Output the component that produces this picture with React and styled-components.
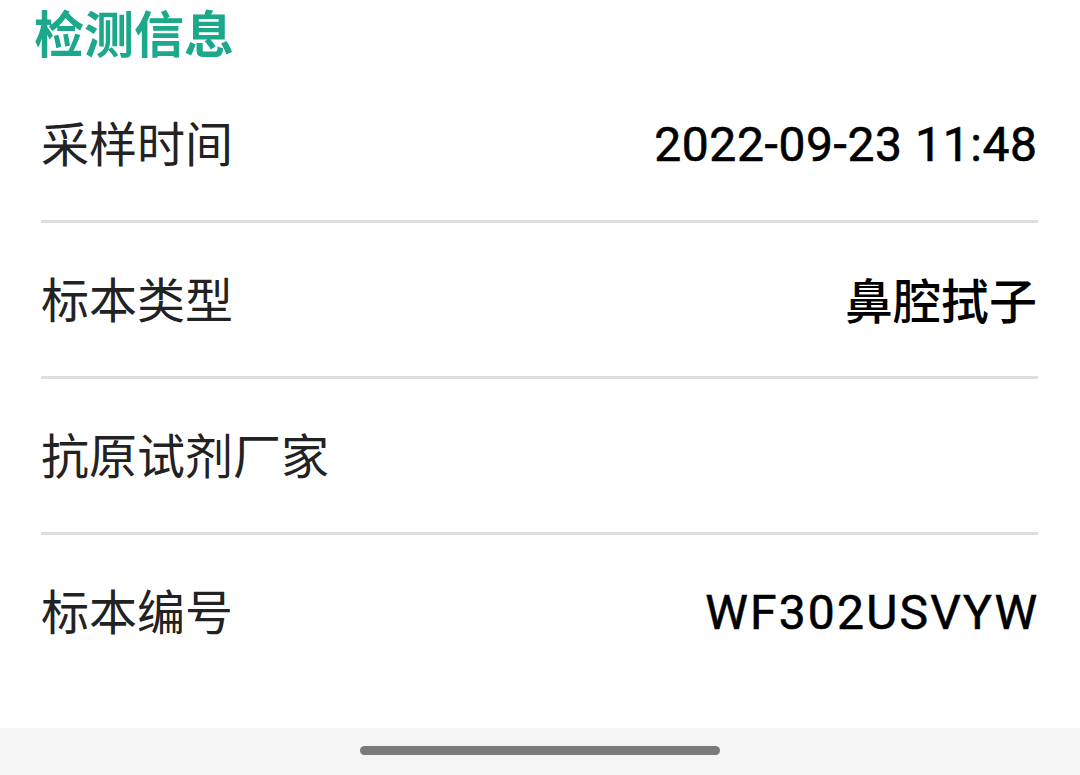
import React from 'react';
import styled, { createGlobalStyle } from 'styled-components';

const GlobalStyle = createGlobalStyle`
  html, body {
    margin: 0;
    padding: 0;
    background: #ffffff;
  }
  body {
    font-family: "Noto Sans CJK SC", "Noto Sans", sans-serif;
  }
`;

const Screen = styled.div`
  width: 1080px;
  height: 775px;
  display: flex;
  flex-direction: column;
  background: #ffffff;
  overflow: hidden;
`;

const Content = styled.div`
  flex: 1;
  padding: 0 42px 0 41px;
  display: flex;
  flex-direction: column;
`;

const SectionTitle = styled.h2`
  margin: 4px 0 9px -7px;
  font-size: 50px;
  line-height: 54px;
  font-weight: 700;
  color: #1ba88b;
  font-family: "Noto Sans CJK SC", sans-serif;
`;

const Row = styled.div`
  box-sizing: border-box;
  padding-bottom: 6px;
  display: flex;
  align-items: center;
  justify-content: space-between;
  border-bottom: ${(p) => (p.$last ? 'none' : '3px solid #dedede')};
  height: ${(p) => (p.$last ? '153px' : '156px')};
`;

const Label = styled.span`
  font-size: 48px;
  color: #222222;
  font-family: "Noto Sans CJK SC", sans-serif;
  line-height: 1;
`;

const Value = styled.span`
  font-size: 48px;
  font-weight: ${(p) => (p.$latin ? 400 : 500)};
  letter-spacing: ${(p) => p.$spacing || 0}px;
  color: #000000;
  font-family: ${(p) =>
    p.$latin ? 'Roboto, "Noto Sans CJK SC", sans-serif' : '"Noto Sans CJK SC", sans-serif'};
  line-height: 1;
  margin-top: ${(p) => (p.$latin ? '8px' : '2px')};
  margin-right: ${(p) => 1 - (p.$spacing || 0)}px;
  -webkit-text-stroke: ${(p) => (p.$latin ? '0.6px #000' : '0')};
`;

const NavBar = styled.div`
  height: 47px;
  background: #f5f5f5;
  display: flex;
  justify-content: center;
  padding-top: 18px;
  box-sizing: border-box;
`;

const Handle = styled.div`
  width: 360px;
  height: 9px;
  border-radius: 5px;
  background: #7b7b7b;
`;

const rows = [
  { label: '采样时间', value: '2022-09-23 11:48', latin: true, spacing: 0.6 },
  { label: '标本类型', value: '鼻腔拭子' },
  { label: '抗原试剂厂家', value: '' },
  { label: '标本编号', value: 'WF302USVYW', latin: true, spacing: 2.2 },
];

const App = () => (
  <Screen>
    <GlobalStyle />
    <Content>
      <SectionTitle>检测信息</SectionTitle>
      {rows.map((r, i) => (
        <Row key={r.label} $last={i === rows.length - 1}>
          <Label>{r.label}</Label>
          <Value $latin={r.latin} $spacing={r.spacing}>
            {r.value}
          </Value>
        </Row>
      ))}
    </Content>
    <NavBar>
      <Handle />
    </NavBar>
  </Screen>
);

export default App;
